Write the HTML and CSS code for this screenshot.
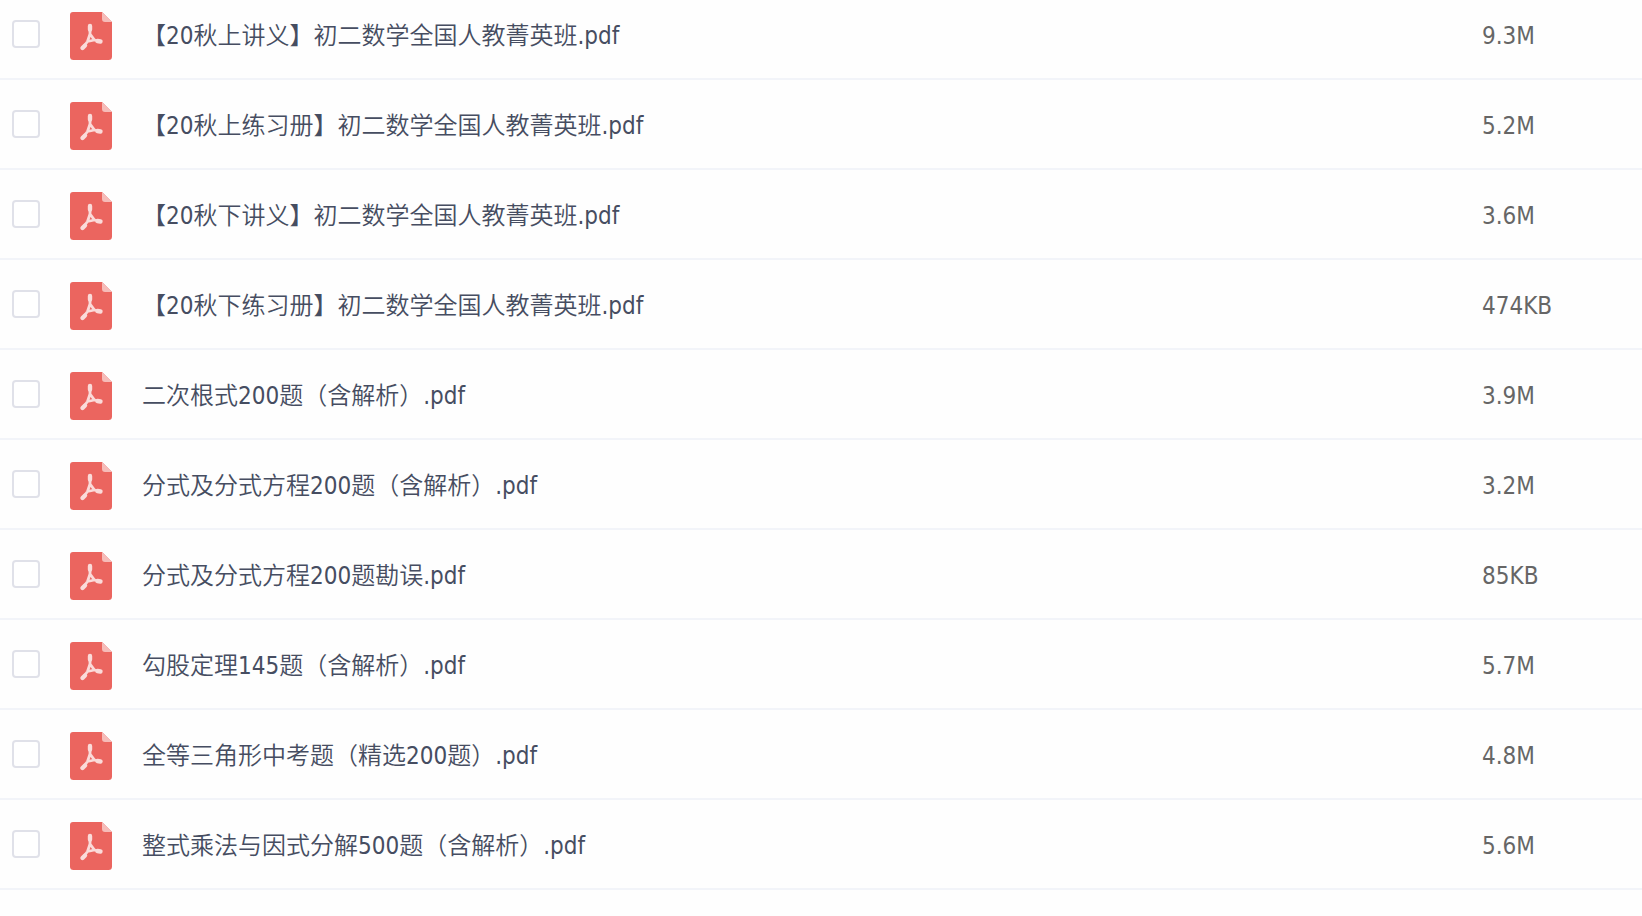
FILE: index.html
```
<!DOCTYPE html>
<html lang="zh-CN">
<head>
<meta charset="utf-8">
<title>文件列表</title>
<link rel="stylesheet" href="styles.css">
</head>
<body>
<svg class="sprite" aria-hidden="true">
  <symbol id="pdf" viewBox="0 0 42 48">
    <path fill="#eb655f" d="M3 0H32L42 10V44.500Q42 48 38.500 48H3.500Q0 48 0 44.500V3Q0 0 3 0Z"/>
    <path fill="#f6bcb9" d="M32 0L42 10H35Q32 10 32 7Z"/>
    <g fill="none" stroke="#fadbd9" stroke-linecap="round" stroke-linejoin="round">
      <path stroke-width="2.800" d="M20 14V22L17.500 29.500L12.500 36M20 22L24.500 28L30 29.500M17.500 29.500L24.500 28"/>
      <path stroke-width="4.400" d="M20 14V17.500M12.500 36L15 33.500M27.500 29L30.500 29.500"/>
    </g>
  </symbol>
</svg>
<main>
  <ul class="files">
    <li class="row"><input class="check" type="checkbox" id="f1"><svg class="icon" aria-hidden="true"><use href="#pdf"/></svg><label class="name" for="f1">【20秋上讲义】初二数学全国人教菁英班.pdf</label><span class="size">9.3M</span></li>
    <li class="row"><input class="check" type="checkbox" id="f2"><svg class="icon" aria-hidden="true"><use href="#pdf"/></svg><label class="name" for="f2">【20秋上练习册】初二数学全国人教菁英班.pdf</label><span class="size">5.2M</span></li>
    <li class="row"><input class="check" type="checkbox" id="f3"><svg class="icon" aria-hidden="true"><use href="#pdf"/></svg><label class="name" for="f3">【20秋下讲义】初二数学全国人教菁英班.pdf</label><span class="size">3.6M</span></li>
    <li class="row"><input class="check" type="checkbox" id="f4"><svg class="icon" aria-hidden="true"><use href="#pdf"/></svg><label class="name" for="f4">【20秋下练习册】初二数学全国人教菁英班.pdf</label><span class="size">474KB</span></li>
    <li class="row"><input class="check" type="checkbox" id="f5"><svg class="icon" aria-hidden="true"><use href="#pdf"/></svg><label class="name" for="f5">二次根式200题（含解析）.pdf</label><span class="size">3.9M</span></li>
    <li class="row"><input class="check" type="checkbox" id="f6"><svg class="icon" aria-hidden="true"><use href="#pdf"/></svg><label class="name" for="f6">分式及分式方程200题（含解析）.pdf</label><span class="size">3.2M</span></li>
    <li class="row"><input class="check" type="checkbox" id="f7"><svg class="icon" aria-hidden="true"><use href="#pdf"/></svg><label class="name" for="f7">分式及分式方程200题勘误.pdf</label><span class="size">85KB</span></li>
    <li class="row"><input class="check" type="checkbox" id="f8"><svg class="icon" aria-hidden="true"><use href="#pdf"/></svg><label class="name" for="f8">勾股定理145题（含解析）.pdf</label><span class="size">5.7M</span></li>
    <li class="row"><input class="check" type="checkbox" id="f9"><svg class="icon" aria-hidden="true"><use href="#pdf"/></svg><label class="name" for="f9">全等三角形中考题（精选200题）.pdf</label><span class="size">4.8M</span></li>
    <li class="row"><input class="check" type="checkbox" id="f10"><svg class="icon" aria-hidden="true"><use href="#pdf"/></svg><label class="name" for="f10">整式乘法与因式分解500题（含解析）.pdf</label><span class="size">5.6M</span></li>
  </ul>
</main>
</body>
</html>
```
FILE: styles.css
```
* {
  box-sizing: border-box;
}

body {
  margin: 0;
  background: #fefefe;
  font-family: "DejaVu Sans Condensed", "Noto Sans CJK SC", sans-serif;
  font-size: 24px;
  font-weight: 350;
  line-height: 36px;
  color: #464d61;
}

.sprite {
  display: none;
}

.files {
  margin: 0;
  padding: 0;
  list-style: none;
}

.row {
  display: flex;
  align-items: flex-start;
  padding: 22px 0 18px 12px;
  border-bottom: 2px solid #f2f4f9;
}

/* The list is scrolled slightly past the top of its first row. */
.row:first-child {
  padding-top: 12px;
}

.check {
  appearance: none;
  flex: none;
  width: 28px;
  height: 28px;
  margin: 8px 30px 0 0;
  border: 2px solid #e0e1e9;
  border-radius: 4px;
  background: #fff;
}

.check:checked {
  background: #06a7ff;
}

.icon {
  flex: none;
  width: 42px;
  height: 48px;
  margin-right: 30px;
}

.name {
  flex: 1;
  min-width: 0;
  padding-top: 6px;
}

.size {
  flex: none;
  width: 160px;
  padding-top: 6px;
  color: #666;
}
```
